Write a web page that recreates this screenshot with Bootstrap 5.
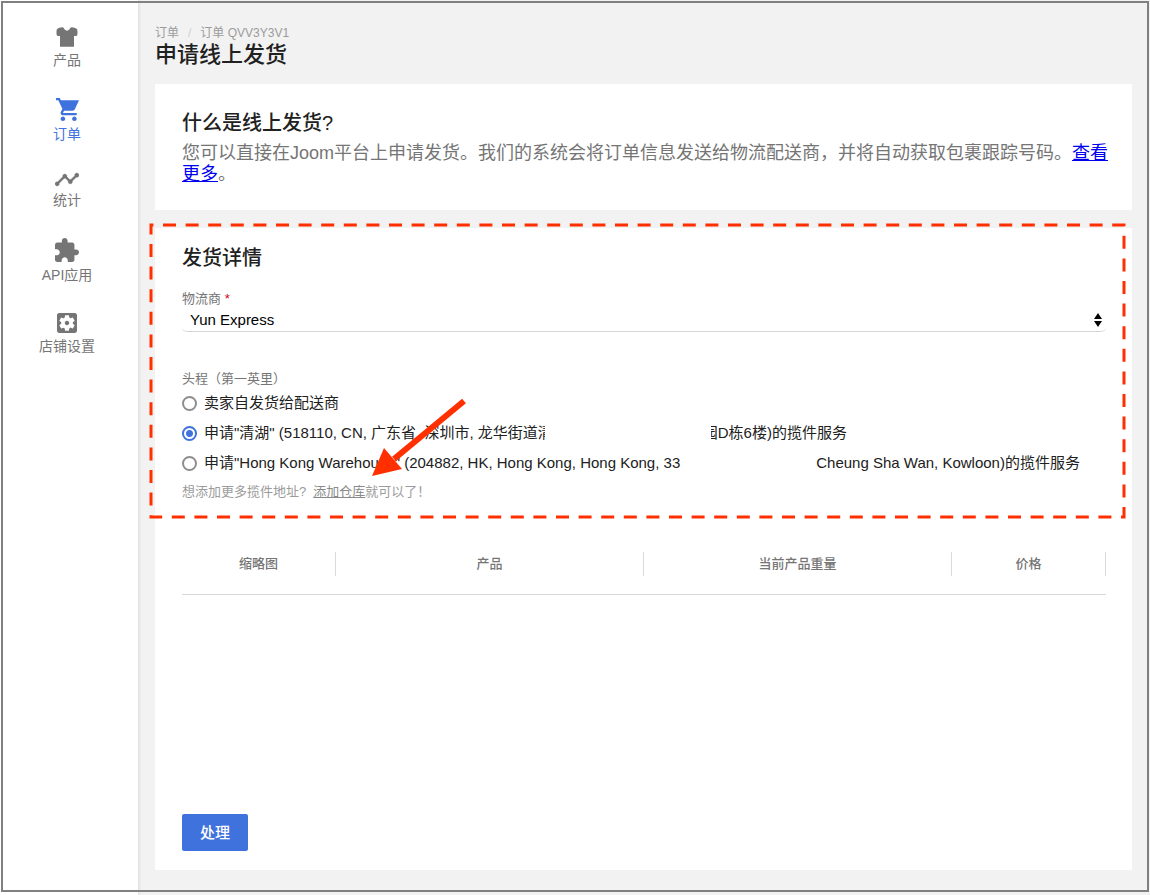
<!DOCTYPE html>
<html lang="zh-CN">
<head>
<meta charset="utf-8">
<meta name="viewport" content="width=device-width, initial-scale=1">
<title>申请线上发货</title>
<link href="https://cdn.jsdelivr.net/npm/bootstrap@5.3.0/dist/css/bootstrap.min.css" rel="stylesheet">
<style>
  body { font-family: "Liberation Sans", "Noto Sans CJK SC", sans-serif; font-size: 15px; color: #212121; background: #f2f2f2; }
  .page-frame { border: 2px solid #808080; inset: 1px 1px 3px 1px; pointer-events: none; z-index: 10; }
  .sidebar { width: 138px; padding: 27px 4px 24px 0; background: #fff; box-shadow: 0 0 4px rgba(0,0,0,.16); }
  .side-list { gap: 28px; }
  .side-link { color: #757575; font-size: 14px; line-height: 20px; gap: 3px; text-decoration: none; }
  .side-link.current { color: #3f72dd; }
  .side-link svg { fill: currentColor; display: block; }
  .content-area { padding: 24px 18px 25px 17px; min-width: 0; }
  .crumbs { font-size: 12px; line-height: 18px; color: #9b9b9b; }
  .crumbs .breadcrumb-item, .crumbs a { color: #9b9b9b; text-decoration: none; }
  .crumbs .breadcrumb-item + .breadcrumb-item::before { color: #cfcfcf; }
  .crumbs .breadcrumb-item + .breadcrumb-item { padding-left: 9px; }
  .crumbs .breadcrumb-item + .breadcrumb-item::before { padding-right: 9px; }
  h1 { font-size: 22px; line-height: 26px; font-weight: 500; margin: 0 0 16px; }
  h2 { font-size: 20px; line-height: 28px; font-weight: 500; margin: 0; }
  .panel { background: #fff; padding: 25px 26px 25px 27px; }
  .intro { font-size: 18px; line-height: 21px; color: #757575; margin: 6px -12px 0 0; }
  .intro a { color: #0000ee; }
  .panel-main { margin-top: 18px; padding-top: 16px; padding-bottom: 19px; }
  .field-block { margin-top: 18px; }
  .field-name { font-size: 13px; line-height: 18px; color: #757575; }
  .required-star { color: #d0021b; }
  .carrier { height: 24px; padding: 0 24px 0 8px; font-size: 15px; line-height: 23px; color: #000; border: 0; border-bottom: 1px solid #d6d6d6; border-radius: 5px;
    background: url("data:image/svg+xml,%3Csvg xmlns='http://www.w3.org/2000/svg' viewBox='0 0 8 14'%3E%3Cpath d='M4 0l4 6H0zM4 14l4-6H0z'/%3E%3C/svg%3E") no-repeat right 4px center / 8px 14px; }
  .first-mile { margin-top: 38px; }
  .pick { min-height: 30px; margin: 0; padding: 0; gap: 7px; font-size: 15px; line-height: 20px; }
  .pick .form-check-input { flex: none; float: none; width: 15px; height: 15px; margin: 0; border: 2px solid #8e8e8e; background: none; }
  .pick .form-check-input:checked { border-color: #3f72dd; background: radial-gradient(circle, #3f72dd 3px, transparent 4px); }
  .pick label { white-space: pre; display: flex; }
  .cut { overflow: hidden; width: 7px; display: flex; }
  .cut-end { justify-content: flex-end; }
  .blank { width: 166px; }
  .blank-short { width: 136px; }
  .hint { font-size: 13px; line-height: 18px; color: #9b9b9b; margin: 5px 0 0; }
  .hint a { color: #8a8a8a; margin-left: 7px; }
  .outline-mark { left: -33px; top: -22px; width: calc(100% + 49px); height: calc(100% + 35px); overflow: visible; pointer-events: none; }
  .arrow-mark { left: 188px; top: 154px; pointer-events: none; }
  .goods { margin: 51px 0 0; table-layout: fixed; border-bottom: 1px solid #d9d9d9; width: 100%; }
  .goods th { font-size: 13px; line-height: 24px; font-weight: 500; color: #757575; text-align: center; padding: 0 0 18px; }
  .goods th span { display: block; border-right: 1px solid #d9d9d9; }
  .submit { background: #3f72dd; border: 0; border-radius: 2px; color: #fff; font-size: 15px; font-weight: 500; line-height: 21px; padding: 8px 18px; }
</style>
</head>
<body>
<div class="page-frame position-fixed"></div>
<div class="d-flex min-vh-100">
  <nav class="sidebar flex-shrink-0" aria-label="主菜单">
    <ul class="side-list list-unstyled d-flex flex-column m-0">
      <li><a class="side-link d-flex flex-column align-items-center" href="#">
        <svg width="22" height="20" viewBox="0 0 22 20"><path d="M6.6 .3C8 .3 8.3 3.6 11 3.6S14 .3 15.400 .3C18.200 .6 20.800 1.400 21.200 2.600C21.600 4 21.600 6 21.300 8.100L20.500 9H18V19.800H4V9H1.500L.7 8.100C.4 6 .4 4 .8 2.600C1.200 1.400 3.800 .6 6.600 .3Z"/></svg>
        <span>产品</span></a></li>
      <li><a class="side-link current d-flex flex-column align-items-center" href="#" aria-current="page">
        <svg width="23" height="23" viewBox="1 2 20 20"><path d="M7 18c-1.100 0-1.990.9-1.990 2S5.900 22 7 22s2-.9 2-2-.9-2-2-2zM1 2v2h2l3.600 7.590-1.350 2.450c-.16.28-.25.61-.25.96 0 1.100.9 2 2 2h12v-2H7.420c-.14 0-.25-.11-.25-.25l.03-.12.9-1.630h7.450c.75 0 1.410-.41 1.750-1.030L21 4H5.210l-.94-2H1zm16 16c-1.100 0-1.990.9-1.990 2s.89 2 1.990 2 2-.9 2-2-.9-2-2-2z"/></svg>
        <span>订单</span></a></li>
      <li><a class="side-link d-flex flex-column align-items-center" href="#">
        <svg width="24" height="15" viewBox="1 6 22 12"><path d="M23 8c0 1.100-.9 2-2 2-.18 0-.35-.02-.51-.07l-3.560 3.550c.05.16.07.34.07.52 0 1.100-.9 2-2 2s-2-.9-2-2c0-.18.02-.36.07-.52l-2.550-2.550c-.16.05-.34.07-.52.07s-.36-.02-.52-.07l-4.550 4.560c.05.16.07.33.07.51 0 1.100-.9 2-2 2s-2-.9-2-2 .9-2 2-2c.18 0 .35.02.51.07l4.560-4.550C8.020 9.360 8 9.180 8 9c0-1.100.9-2 2-2s2 .9 2 2c0 .18-.02.36-.07.52l2.550 2.550c.16-.05.34-.07.52-.07s.36.02.52.07l3.550-3.560C19.020 8.350 19 8.180 19 8c0-1.100.9-2 2-2s2 .9 2 2z" stroke="currentColor" stroke-width=".3"/></svg>
        <span>统计</span></a></li>
      <li><a class="side-link d-flex flex-column align-items-center" href="#">
        <svg width="24" height="24" viewBox="2 1 21 21"><path d="M20.500 11H19V7c0-1.100-.9-2-2-2h-4V3.500C13 2.120 11.880 1 10.500 1S8 2.120 8 3.500V5H4c-1.100 0-1.990.9-1.990 2v3.800H3.500c1.490 0 2.700 1.210 2.700 2.700s-1.210 2.700-2.700 2.700H2V20c0 1.100.9 2 2 2h3.800v-1.500c0-1.490 1.210-2.700 2.700-2.700 1.490 0 2.700 1.210 2.700 2.700V22H17c1.100 0 2-.9 2-2v-4h1.500c1.380 0 2.500-1.120 2.500-2.500S21.880 11 20.500 11z"/></svg>
        <span>API应用</span></a></li>
      <li><a class="side-link d-flex flex-column align-items-center" href="#">
        <svg width="20" height="20" viewBox="3 3 18 18"><path d="M12 10c-1.100 0-2 .9-2 2s.9 2 2 2 2-.9 2-2-.9-2-2-2zm7-7H5c-1.110 0-2 .9-2 2v14c0 1.100.89 2 2 2h14c1.110 0 2-.9 2-2V5c0-1.100-.89-2-2-2zm-1.750 9c0 .23-.02.46-.05.68l1.480 1.160c.13.11.17.3.08.45l-1.400 2.420c-.09.15-.27.21-.43.15l-1.740-.7c-.36.28-.76.51-1.180.69l-.26 1.850c-.03.17-.18.3-.35.3h-2.800c-.17 0-.32-.13-.35-.29l-.26-1.850c-.43-.18-.82-.41-1.180-.69l-1.740.7c-.16.06-.34 0-.43-.15l-1.400-2.420c-.09-.15-.05-.34.08-.45l1.480-1.160c-.03-.23-.05-.46-.05-.69s.02-.46.05-.68l-1.480-1.160c-.13-.11-.17-.3-.08-.45l1.400-2.420c.09-.15.27-.21.43-.15l1.740.7c.36-.28.76-.51 1.180-.69l.26-1.850c.03-.17.18-.3.35-.3h2.800c.17 0 .32.13.35.29l.26 1.850c.43.18.82.41 1.180.69l1.740-.7c.16-.06.34 0 .43.15l1.400 2.420c.09.15.05.34-.08.45l-1.480 1.160c.03.23.05.46.05.69z"/></svg>
        <span>店铺设置</span></a></li>
    </ul>
  </nav>

  <main class="content-area flex-grow-1 d-flex flex-column">
    <nav class="crumbs" aria-label="breadcrumb">
      <ol class="breadcrumb m-0">
        <li class="breadcrumb-item"><a href="#">订单</a></li>
        <li class="breadcrumb-item"><a href="#">订单 QVV3Y3V1</a></li>
      </ol>
    </nav>
    <h1>申请线上发货</h1>

    <section class="panel">
      <h2>什么是线上发货?</h2>
      <p class="intro">您可以直接在Joom平台上申请发货。我们的系统会将订单信息发送给物流配送商，并将自动获取包裹跟踪号码。<a href="#">查看更多</a>。</p>
    </section>

    <form class="panel panel-main flex-grow-1 d-flex flex-column">
      <div class="position-relative">
        <h2>发货详情</h2>
        <div class="field-block">
          <label class="field-name d-block" for="carrier">物流商 <span class="required-star">*</span></label>
          <select class="carrier form-select" id="carrier"><option>Yun Express</option></select>
        </div>
        <fieldset class="first-mile">
          <legend class="field-name m-0">头程（第一英里）</legend>
          <div class="pick form-check d-flex align-items-center">
            <input class="form-check-input" type="radio" name="mile" id="mile1"><label for="mile1">卖家自发货给配送商</label>
          </div>
          <div class="pick form-check d-flex align-items-center">
            <input class="form-check-input" type="radio" name="mile" id="mile2" checked><label for="mile2"><span>申请"清湖" (518110, CN, 广东省, 深圳市, 龙华街道</span><span class="cut">清</span><span class="blank"></span><span class="cut cut-end">园</span><span>D栋6楼)的揽件服务</span></label>
          </div>
          <div class="pick form-check d-flex align-items-center">
            <input class="form-check-input" type="radio" name="mile" id="mile3"><label for="mile3"><span>申请"Hong Kong Warehouse" (204882, HK, Hong Kong, Hong Kong, 33</span><span class="blank-short"></span><span>Cheung Sha Wan, Kowloon)的揽件服务</span></label>
          </div>
        </fieldset>
        <p class="hint">想添加更多揽件地址?<a href="#">添加仓库</a>就可以了！</p>
        <svg class="outline-mark position-absolute" aria-hidden="true"><rect x="2" y="3" width="100%" height="100%" fill="none" stroke="#ff2f00" stroke-width="3" stroke-dasharray="13 9.600" stroke-dashoffset="10.600"/></svg>
        <svg class="arrow-mark position-absolute" width="98" height="80" viewBox="0 0 98 80" aria-hidden="true"><path d="M94 3L24 61" stroke="#ff2f00" stroke-width="6"/><path d="M2 78L14 50L32 71Z" fill="#ff2f00"/></svg>
      </div>

      <table class="goods">
        <colgroup><col style="width:16.667%"><col style="width:33.333%"><col style="width:33.333%"><col style="width:16.667%"></colgroup>
        <thead><tr><th scope="col"><span>缩略图</span></th><th scope="col"><span>产品</span></th><th scope="col"><span>当前产品重量</span></th><th scope="col"><span>价格</span></th></tr></thead>
      </table>
      <div class="mt-auto"><button class="submit btn" type="submit">处理</button></div>
    </form>
  </main>
</div>
<script src="https://cdn.jsdelivr.net/npm/bootstrap@5.3.0/dist/js/bootstrap.bundle.min.js"></script>
</body>
</html>
